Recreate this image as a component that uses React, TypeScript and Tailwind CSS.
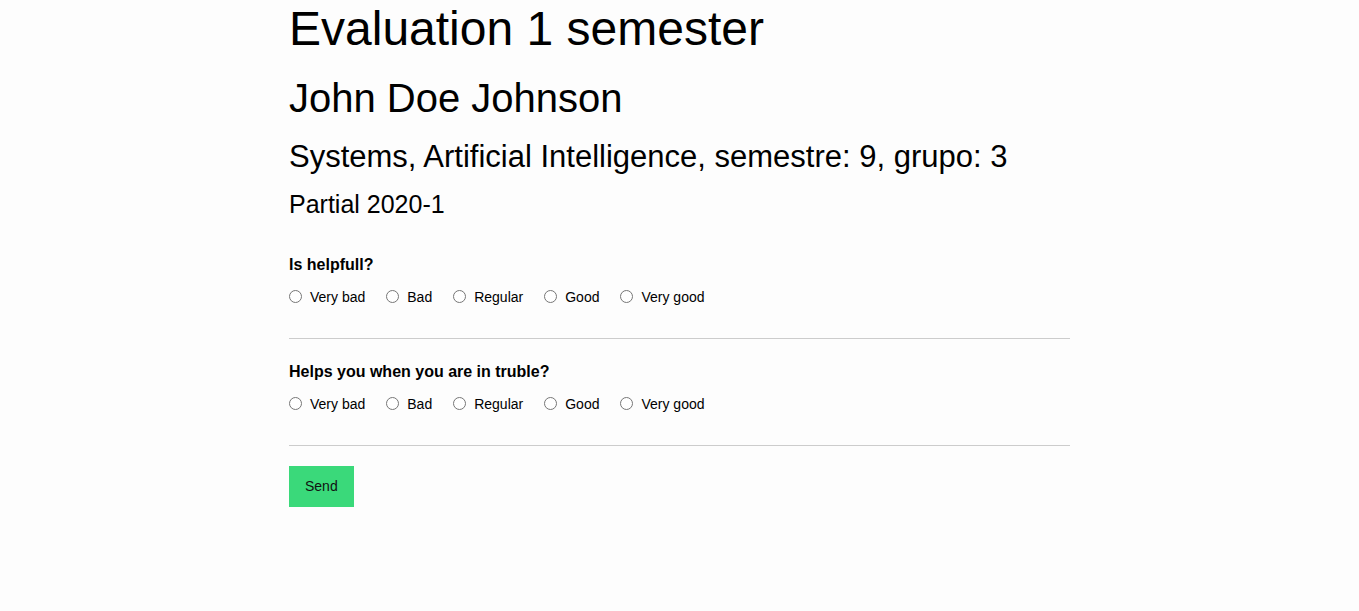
import React from 'react';

const options = ['Very bad', 'Bad', 'Regular', 'Good', 'Very good'];

const questions = [
  { id: 'q1', text: 'Is helpfull?' },
  { id: 'q2', text: 'Helps you when you are in truble?' },
];

function Question({ id, text }: { id: string; text: string }) {
  return (
    <div className="border-b border-[#cccccc] pt-[24px] pb-[33px] first:pt-[38px]">
      <p className="text-[16px] font-bold leading-[18px]">{text}</p>
      <div className="mt-[15px] flex items-center gap-[21px]">
        {options.map((opt) => (
          <label key={opt} className="flex items-center gap-2 text-[14px] leading-4">
            <input type="radio" name={id} className="m-0 h-[13px] w-[13px] -translate-y-[1px]" />
            <span>{opt}</span>
          </label>
        ))}
      </div>
    </div>
  );
}

export default function App() {
  return (
    <div className="min-h-screen bg-[#fdfdfd] text-black" style={{ fontFamily: '"Liberation Sans", Arial, sans-serif' }}>
      <div className="mx-auto w-[781px]">
        <h1 className="pt-px text-[48px] leading-[55px]">Evaluation 1 semester</h1>
        <h2 className="mt-[19px] text-[40px] leading-[46px]">John Doe Johnson</h2>
        <h3 className="mt-[18px] text-[31px] leading-[35px]">Systems, Artificial Intelligence, semestre: 9, grupo: 3</h3>
        <h4 className="mt-[16px] text-[25px] leading-[28px]">Partial 2020-1</h4>

        <form>
          {questions.map((q) => (
            <Question key={q.id} id={q.id} text={q.text} />
          ))}
          <button type="button" className="mt-[20px] h-[41px] bg-[#3ad97a] px-4 text-[14px] text-[#111]">
            Send
          </button>
        </form>
      </div>
    </div>
  );
}
